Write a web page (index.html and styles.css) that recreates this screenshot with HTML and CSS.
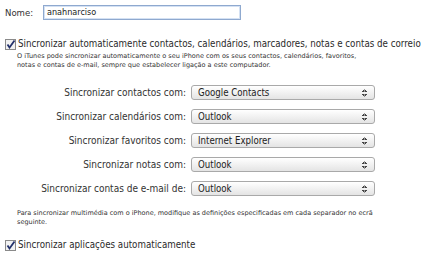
FILE: index.html
```html
<!DOCTYPE html>
<html>
<head>
<meta charset="utf-8">
<link rel="stylesheet" href="styles.css">
</head>
<body>
<div class="page">
  <div class="name-row">
    <span class="name-label">Nome:</span>
    <div class="textbox">anahnarciso</div>
  </div>

  <div class="check-row sync-main">
    <span class="check"><svg width="11" height="11" viewBox="0 0 11 11"><rect x="0.5" y="0.5" width="10" height="10" fill="#f2f2f2" stroke="#8a8a8a"/><path d="M2.5 5.5 L4.5 8.5 L9.5 1.5" fill="none" stroke="#23316b" stroke-width="1.8"/></svg></span>
    <span class="check-label">Sincronizar automaticamente contactos, calendários, marcadores, notas e contas de correio</span>
  </div>
  <p class="small desc">O iTunes pode sincronizar automaticamente o seu iPhone com os seus contactos, calendários, favoritos,<br>notas e contas de e-mail, sempre que estabelecer ligação a este computador.</p>

  <div class="rows">
    <span class="row-label">Sincronizar contactos com:</span>
    <div class="select">Google Contacts<span class="arrows"></span></div>
    <span class="row-label">Sincronizar calendários com:</span>
    <div class="select">Outlook<span class="arrows"></span></div>
    <span class="row-label">Sincronizar favoritos com:</span>
    <div class="select">Internet Explorer<span class="arrows"></span></div>
    <span class="row-label">Sincronizar notas com:</span>
    <div class="select">Outlook<span class="arrows"></span></div>
    <span class="row-label">Sincronizar contas de e-mail de:</span>
    <div class="select">Outlook<span class="arrows"></span></div>
  </div>

  <p class="small foot">Para sincronizar multimédia com o iPhone, modifique as definições especificadas em cada separador no ecrã<br>seguinte.</p>

  <div class="check-row sync-apps">
    <span class="check"><svg width="11" height="11" viewBox="0 0 11 11"><rect x="0.5" y="0.5" width="10" height="10" fill="#f2f2f2" stroke="#8a8a8a"/><path d="M2.5 5.5 L4.5 8.5 L9.5 1.5" fill="none" stroke="#23316b" stroke-width="1.8"/></svg></span>
    <span class="check-label">Sincronizar aplicações automaticamente</span>
  </div>
</div>
</body>
</html>
```

FILE: styles.css
```css
html, body {
  margin: 0;
  padding: 0;
  background: #ffffff;
}
body {
  font-family: "DejaVu Sans Condensed", "DejaVu Sans", sans-serif;
  color: #2a2a2a;
  width: 425px;
  height: 256px;
  overflow: hidden;
}
.page {
  padding: 4px 0 0 5px;
}
.name-row {
  display: flex;
  align-items: center;
  height: 17px;
}
.name-label {
  font-size: 9.5px;
  width: 38px;
  color: #333;
}
.textbox {
  width: 193px;
  height: 13px;
  border: 1px solid #8fa9cf;
  box-shadow: inset 0 0 0 1px #d4e1f3;
  padding: 0 0 0 3px;
  font-size: 9px;
  line-height: 13px;
  color: #222;
}
.check-row {
  display: flex;
  align-items: center;
  gap: 2px;
  height: 12px;
}
.check {
  width: 11px;
  height: 11px;
  display: block;
}
.check svg {
  display: block;
}
.check-label {
  font-size: 9.7px;
  line-height: 12px;
  white-space: nowrap;
  color: #2a2a2a;
}
.sync-main {
  margin-top: 17px;
}
.small {
  font-family: "DejaVu Sans", sans-serif;
  font-size: 6.5px;
  line-height: 9px;
  color: #333;
  margin: 0;
  padding-left: 12px;
}
.desc {
  margin-top: 2px;
}
.rows {
  display: grid;
  grid-template-columns: 181px 184px;
  column-gap: 5px;
  row-gap: 9px;
  align-items: center;
  margin-top: 15px;
}
.row-label {
  text-align: right;
  font-size: 10px;
  color: #333;
}
.select {
  position: relative;
  height: 13px;
  border: 1px solid #a9a9a9;
  border-radius: 3px;
  background: linear-gradient(#ffffff, #e4e4e4);
  font-size: 9.6px;
  line-height: 13px;
  padding-left: 6px;
  color: #222;
}
.arrows {
  position: absolute;
  right: 7px;
  top: 3px;
  width: 5px;
  height: 8px;
  background:
    linear-gradient(to bottom right, transparent 50%, #444 50%) left top / 50% 3px no-repeat,
    linear-gradient(to bottom left, transparent 50%, #444 50%) right top / 50% 3px no-repeat,
    linear-gradient(to top right, transparent 50%, #444 50%) left bottom / 50% 3px no-repeat,
    linear-gradient(to top left, transparent 50%, #444 50%) right bottom / 50% 3px no-repeat;
}
.foot {
  margin-top: 13px;
}
.sync-apps {
  margin-top: 12px;
}
```
